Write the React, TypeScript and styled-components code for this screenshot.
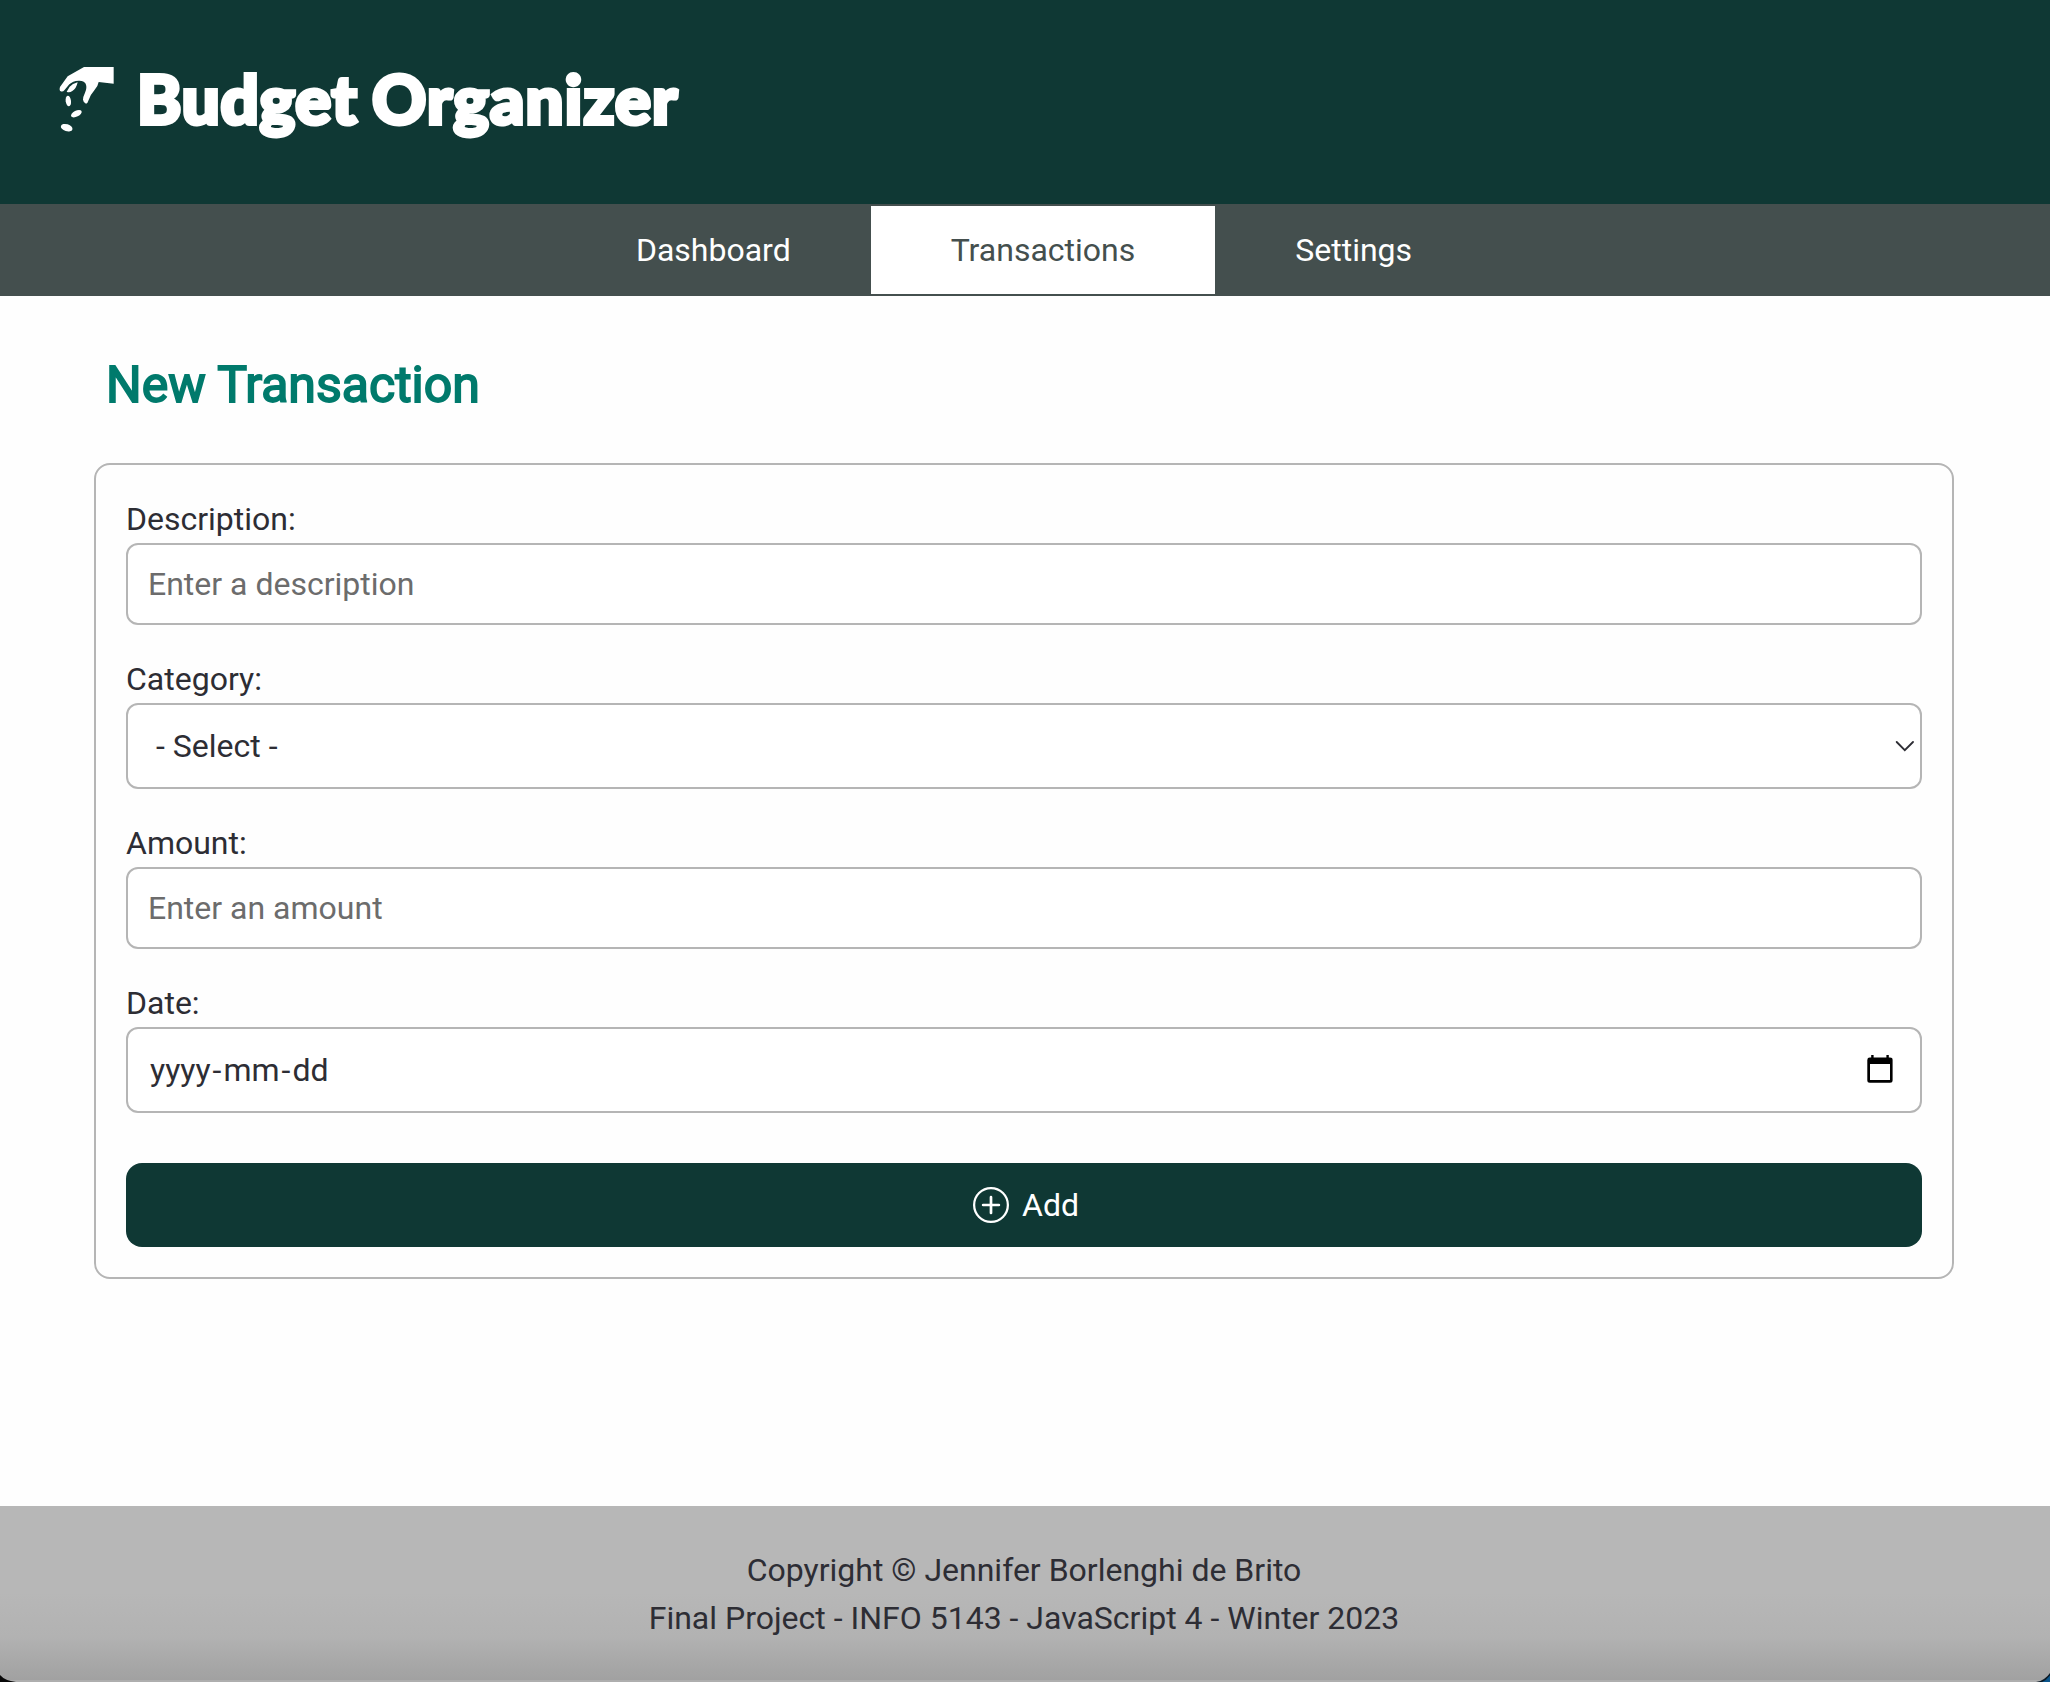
import React from 'react';
import styled, { createGlobalStyle, css } from 'styled-components';

const colors = {
  dark: '#0f3834',
  slate: '#444f4e',
  teal: '#007a6c',
  gray: '#b5b5b5',
  text: '#2d2d34',
  placeholder: '#6c6c6c',
};

const GlobalStyle = createGlobalStyle`
  *, *::before, *::after { box-sizing: border-box; }
  body {
    margin: 0;
    background: #fefefe;
    color: ${colors.text};
    font: 400 32px/48px Roboto, "Liberation Sans", sans-serif;
    overflow: hidden;
  }
`;

const Page = styled.div`
  position: relative;
  display: flex;
  flex-direction: column;
  width: 2050px;
  height: 1682px;
`;

const Header = styled.header`
  display: flex;
  align-items: flex-start;
  height: 204px;
  padding: 66px 0 0 58px;
  background: ${colors.dark};
  color: #fff;
`;

const Logo = styled.svg`
  flex: none;
  width: 57px;
  height: 67px;
`;

const Brand = styled.h1`
  display: flex;
  margin: -13px 0 0 22px;
  font: 900 67px/90px Lato, "Open Sans", sans-serif;
  -webkit-text-stroke: 4px #fff;
`;

const BrandWord = styled.span<{ $width: number; $spacing: number }>`
  width: ${(p) => p.$width}px;
  letter-spacing: ${(p) => p.$spacing}px;
  white-space: nowrap;
`;

const Nav = styled.nav`
  display: flex;
  justify-content: center;
  height: 92px;
  padding: 2px 2px 2px 0;
  background: ${colors.slate};
`;

const NavLink = styled.a<{ $active?: boolean }>`
  padding: 20px 80px;
  color: #fff;
  ${(p) =>
    p.$active &&
    css`
      background: #fff;
      color: ${colors.slate};
    `}
`;

const Main = styled.main`
  flex: 1;
  padding: 51px 96px 0 94px;
`;

const Title = styled.h2`
  margin: 0 0 40px;
  padding-left: 12px;
  color: ${colors.teal};
  font-size: 50px;
  font-weight: 400;
  line-height: 76px;
  -webkit-text-stroke: 1.8px ${colors.teal};
`;

const Form = styled.form`
  display: flex;
  flex-direction: column;
  gap: 30px;
  padding: 30px;
  border: 2px solid ${colors.gray};
  border-radius: 16px;
`;

const Field = styled.label`
  display: flex;
  flex-direction: column;
`;

const control = css`
  width: 100%;
  border: 2px solid ${colors.gray};
  border-radius: 12px;
  background: #fff;
  color: ${colors.text};
  font: inherit;
`;

const Input = styled.input`
  ${control}
  height: 82px;
  padding: 0 20px;
  &::placeholder { color: ${colors.placeholder}; opacity: 1; }
`;

const SelectBox = styled.div`
  ${control}
  display: flex;
  align-items: center;
  justify-content: space-between;
  height: 86px;
  padding: 0 6px 0 28px;
`;

const DateBox = styled(SelectBox)`
  padding: 0 27px 0 22px;
`;

const DateParts = styled.span`
  display: flex;
  gap: 2px;
`;

const Chevron = styled.svg`
  width: 19px;
  height: 12px;
`;

const Calendar = styled.svg`
  width: 26px;
  height: 28px;
  margin: 0 0 2px;
`;

const AddButton = styled.button`
  display: flex;
  align-items: center;
  justify-content: center;
  gap: 13px;
  height: 84px;
  margin-top: 20px;
  padding: 0 0 0 4px;
  border: 0;
  border-radius: 16px;
  background: ${colors.dark};
  color: #fff;
  font: inherit;
`;

const PlusCircle = styled.svg`
  width: 36px;
  height: 36px;
`;

const Footer = styled.footer`
  height: 176px;
  padding: 40px 2px 38px 0;
  border-bottom: 2px solid #aeaeae;
  background: linear-gradient(#b7b7b7 0, #b7b7b7 50%, #b2b2b2 75%, #a1a1a1 100%);
  text-align: center;
`;

const FooterLine = styled.p`
  margin: 0;
`;

const Corner = styled.svg<{ $side: 'left' | 'right' }>`
  position: absolute;
  bottom: 0;
  ${(p) => p.$side}: 0;
  width: 18px;
  height: 12px;
`;

function HandLogo() {
  return (
    <Logo viewBox="54 48 171 201" fill="#fff">
      <path d="M132 51H221V101L176 96Q174 110 162 122Q150 135 145 152Q143 160 138 161Q130 158 129 149Q129 140 135 128Q142 113 137 101Q131 91 116 92Q98 93 88 103L73 121Q69 126 62 124Q57 121 60 111L83 79Z" />
      <path d="M113 97Q97 101 89 110L80 125Q88 129 97 123Q109 116 113 97Z" />
      <ellipse cx="85" cy="153" rx="8" ry="16" transform="rotate(-7 85 153)" />
      <ellipse cx="109" cy="191" rx="17.5" ry="9" transform="rotate(-27 109 191)" />
      <ellipse cx="80" cy="233" rx="18" ry="10.5" transform="rotate(17 80 233)" />
    </Logo>
  );
}

export default function App() {
  return (
    <>
      <GlobalStyle />
      <Page>
        <Header>
          <HandLogo />
          <Brand>
            <BrandWord $width={235} $spacing={0.8}>Budget</BrandWord>
            <BrandWord $width={310} $spacing={1.2}>Organizer</BrandWord>
          </Brand>
        </Header>
        <Nav>
          <NavLink>Dashboard</NavLink>
          <NavLink $active>Transactions</NavLink>
          <NavLink>Settings</NavLink>
        </Nav>
        <Main>
          <Title>New Transaction</Title>
          <Form>
            <Field>
              Description:
              <Input placeholder="Enter a description" />
            </Field>
            <Field>
              Category:
              <SelectBox>
                <span>- Select -</span>
                <Chevron viewBox="0 0 19 12" fill="none" stroke={colors.text} strokeWidth="1.8" strokeLinecap="round">
                  <path d="M1.7 2L9.8 10.2L18 2" />
                </Chevron>
              </SelectBox>
            </Field>
            <Field>
              Amount:
              <Input placeholder="Enter an amount" />
            </Field>
            <Field>
              Date:
              <DateBox>
                <DateParts>
                  <span>yyyy</span>
                  <span>-</span>
                  <span>mm</span>
                  <span>-</span>
                  <span>dd</span>
                </DateParts>
                <Calendar viewBox="0 0 26 28">
                  <path
                    fillRule="evenodd"
                    d="M4.2 0H6.6V2.6H19.4V0H21.8V2.6H23Q25.6 2.6 25.6 5V25.3Q25.6 27.8 23 27.8H2.8Q.3 27.8 .3 25.3V5Q.3 2.6 2.8 2.6H4.2ZM3 9V25H23V9Z"
                  />
                </Calendar>
              </DateBox>
            </Field>
            <AddButton type="button">
              <PlusCircle viewBox="0 0 16 16" fill="none" stroke="#fff">
                <circle cx="8" cy="8" r="7.5" />
                <path d="M8 4.5V11.5M4.5 8H11.5" strokeWidth="1.2" strokeLinecap="round" />
              </PlusCircle>
              Add
            </AddButton>
          </Form>
        </Main>
        <Footer>
          <FooterLine>Copyright © Jennifer Borlenghi de Brito</FooterLine>
          <FooterLine>Final Project - INFO 5143 - JavaScript 4 - Winter 2023</FooterLine>
        </Footer>
        <Corner $side="left" viewBox="0 0 18 12">
          <path d="M0 5Q5 10.8 16 12H0Z" fill="#080808" />
        </Corner>
        <Corner $side="right" viewBox="0 0 18 12">
          <path d="M18 3Q13 10.5 4 12H18Z" fill="#0b1a26" />
          <path d="M18 5.5Q14 10.5 10 12H18Z" fill="#0c568c" />
        </Corner>
      </Page>
    </>
  );
}
